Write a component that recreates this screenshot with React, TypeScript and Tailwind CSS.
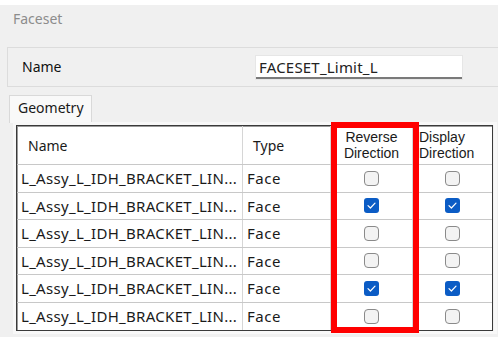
import React from "react";

const rows = [false, true, false, false, true, false];

function Box({ checked }: { checked: boolean }) {
  if (checked) {
    return (
      <div className="w-[15px] h-[15px] rounded-[3px] bg-[#0b5cc5] flex items-center justify-center">
        <svg width="9" height="7" viewBox="0 0 9 7" fill="none">
          <path d="M1 3.6 L3.4 6 L8 1.2" stroke="#ffffff" strokeWidth="1.2" strokeLinecap="round" strokeLinejoin="round" />
        </svg>
      </div>
    );
  }
  return <div className="w-[15px] h-[15px] rounded-[4px] border-[1.5px] border-[#8a8a8a] bg-[#f3f3f3]" />;
}

const lib = { fontFamily: '"Liberation Sans", Arial, sans-serif' };

export default function App() {
  return (
    <div
      className="w-[498px] h-[337px] bg-[#f0f0f0] overflow-hidden relative text-[#1a1a1a]"
      style={{ fontFamily: '"Noto Sans", "Noto Sans CJK KR", sans-serif' }}
    >
      <div className="h-[5px] bg-white" />
      <div className="h-[42px] pl-[13px] pt-[4px] text-[14px] text-[#8c8c8c] leading-[20px]">Faceset</div>
      <div className="ml-[7px] h-[40px] border-y border-l border-[#dcdcdc] flex items-center">
        <div className="w-[248px] pl-[14px] text-[14px] leading-[20px] text-[#111]">Name</div>
        <div className="w-[206px] h-[23px] bg-white border-b-2 border-[#7a7a7a] shadow-[0_0_0_1px_#e6e6e6] pl-[3px] text-[15px] tracking-[0.2px] leading-[22px] text-[#222]">
          FACESET_Limit_L
        </div>
      </div>
      <div className="h-[8px]" />
      <div className="ml-[9px] w-[83px] h-[28px] bg-[#f9f9f9] border border-b-0 border-[#d9d9d9] pl-[8px] pt-[3px] text-[14px] leading-[18px]">
        Geometry
      </div>
      <div className="relative ml-[13px] w-[484px] border-[3px] border-[#f8f8f8] -mt-[1px]">
        <div className="w-[477px] border border-[#3a3a3a] bg-white shadow-[inset_1px_1px_0_#9a9a9a]">
          <div className="flex h-[39px] border-b border-[#c8c8c8] text-[14px]">
            <div className="w-[226px] border-r border-[#d6d6d6] pl-[11px] flex items-center">Name</div>
            <div className="w-[88px] border-r border-[#d6d6d6] pl-[10px] flex items-center">Type</div>
            <div className="w-[82px] border-r border-[#d6d6d6] flex flex-col items-center justify-center text-center text-[14px] leading-[16px]" style={lib}>
              <span className="block">Reverse</span>
              <span className="block">Direction</span>
            </div>
            <div className="flex-1 pl-[6px] flex flex-col justify-center text-[14px] leading-[16px]" style={lib}>
              <span className="block">Display</span>
              <span className="block">Direction</span>
            </div>
          </div>
          {rows.map((c, i) => (
            <div
              key={i}
              className={`flex h-[27.5px] text-[15px] ${i < rows.length - 1 ? "border-b border-[#c8c8c8]" : ""}`}
            >
              <div className="w-[226px] border-r border-[#d6d6d6] pl-[4px] flex items-center whitespace-nowrap overflow-hidden tracking-[0.3px]">
                L_Assy_L_IDH_BRACKET_LIN...
              </div>
              <div className="w-[88px] border-r border-[#d6d6d6] pl-[4px] flex items-center tracking-[0.5px]">Face</div>
              <div className="w-[82px] border-r border-[#d6d6d6] flex items-center justify-center">
                <Box checked={c} />
              </div>
              <div className="flex-1 flex items-center justify-center">
                <Box checked={c} />
              </div>
            </div>
          ))}
        </div>
        <div className="absolute left-[315px] top-[-3px] w-[88px] h-[211px] border-[6px] border-[#ff0000]" />
      </div>
    </div>
  );
}
